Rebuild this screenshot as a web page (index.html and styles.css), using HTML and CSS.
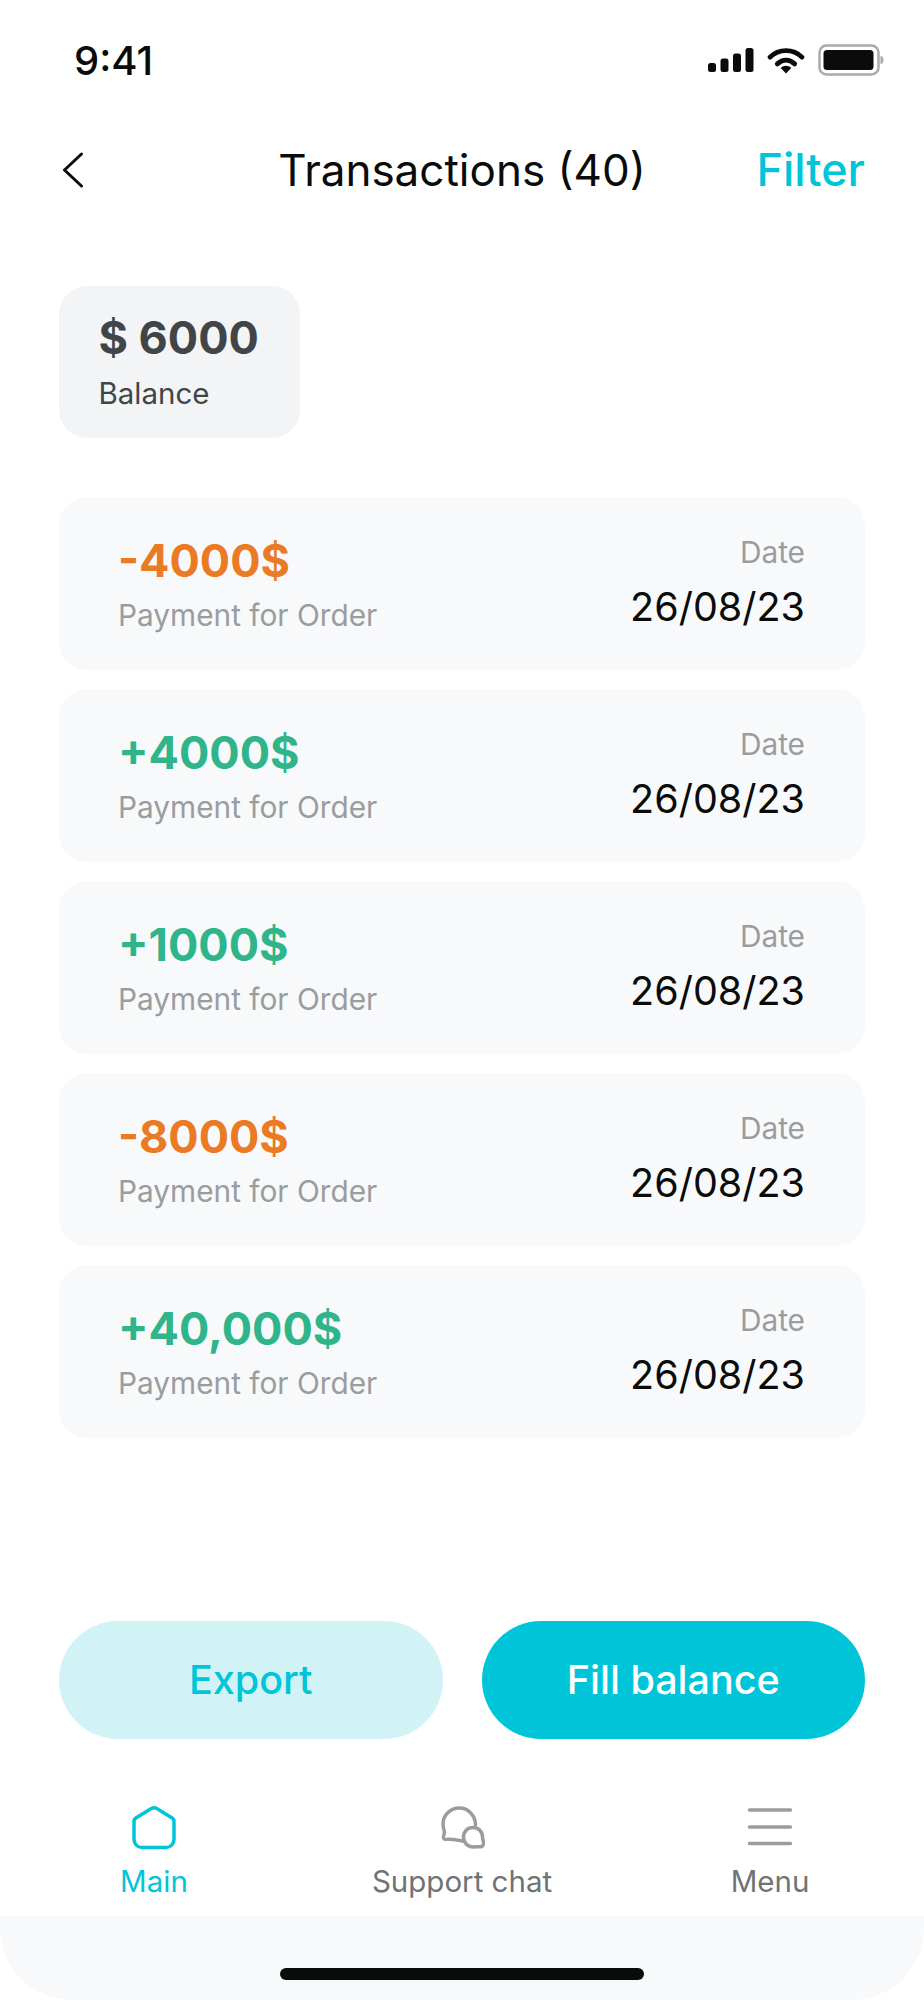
FILE: index.html
```html
<!DOCTYPE html>
<html lang="en">
  <head>
    <meta charset="UTF-8" />
    <meta name="viewport" content="width=device-width, initial-scale=1.0" />
    <title>Transactions</title>
    <link rel="stylesheet" href="styles.css">
  </head>
  <body>
    <div class="screen">
      <div class="status-bar">
        <span class="time">9:41</span>
        <div class="status-icons">
          <svg class="signal" width="46" height="24" viewBox="0 0 46 24">
            <rect x="0" y="15" width="8" height="9" rx="2.500" fill="#0a0c0b" />
            <rect x="12.500" y="10.500" width="8" height="13.500" rx="2.500" fill="#0a0c0b" />
            <rect x="25" y="5.500" width="8" height="18.500" rx="2.500" fill="#0a0c0b" />
            <rect x="37.500" y="0" width="8" height="24" rx="2.500" fill="#0a0c0b" />
          </svg>
          <svg class="wifi" width="38" height="27" viewBox="0 0 38 28">
            <path d="M2.500 10.500C11.500 1.500 26.500 1.500 35.500 10.500" fill="none" stroke="#0a0c0b" stroke-width="5" stroke-linecap="round" />
            <path d="M10 17.500C15.500 12.500 22.500 12.500 28 17.500" fill="none" stroke="#0a0c0b" stroke-width="5" stroke-linecap="round" />
            <path d="M13.500 21.800C16.800 18.800 21.200 18.800 24.500 21.800L19 27.500Z" fill="#0a0c0b" />
          </svg>
          <svg class="battery" width="66" height="32" viewBox="0 0 66 32">
            <rect x="1.500" y="1.500" width="59" height="29" rx="7" fill="none" stroke="#a9abab" stroke-width="2.500" />
            <rect x="5.500" y="6" width="50" height="20" rx="3.500" fill="#0a0c0b" />
            <path d="M62.500 11.500C64.500 12.500 65.500 14 65.500 16C65.500 18 64.500 19.500 62.500 20.500Z" fill="#a9abab" />
          </svg>
        </div>
      </div>

      <div class="top-bar">
        <button class="back">
          <svg width="22" height="36" viewBox="0 0 22 36">
            <path d="M19.500 2L2.500 18L19.500 34" fill="none" stroke="#0a0c0b" stroke-width="3" stroke-linecap="round" stroke-linejoin="round" />
          </svg>
        </button>
        <h1>Transactions (40)</h1>
        <a class="filter">Filter</a>
      </div>

      <div class="balance">
        <div class="balance-value">$ 6000</div>
        <div class="balance-label">Balance</div>
      </div>

      <div class="list">
        <div class="item">
          <div>
            <div class="amount minus">-4000$</div>
            <div class="note">Payment for Order</div>
          </div>
          <div class="item-date">
            <div class="note">Date</div>
            <div class="date">26/08/23</div>
          </div>
        </div>
        <div class="item">
          <div>
            <div class="amount plus">+4000$</div>
            <div class="note">Payment for Order</div>
          </div>
          <div class="item-date">
            <div class="note">Date</div>
            <div class="date">26/08/23</div>
          </div>
        </div>
        <div class="item">
          <div>
            <div class="amount plus">+1000$</div>
            <div class="note">Payment for Order</div>
          </div>
          <div class="item-date">
            <div class="note">Date</div>
            <div class="date">26/08/23</div>
          </div>
        </div>
        <div class="item">
          <div>
            <div class="amount minus">-8000$</div>
            <div class="note">Payment for Order</div>
          </div>
          <div class="item-date">
            <div class="note">Date</div>
            <div class="date">26/08/23</div>
          </div>
        </div>
        <div class="item">
          <div>
            <div class="amount plus">+40,000$</div>
            <div class="note">Payment for Order</div>
          </div>
          <div class="item-date">
            <div class="note">Date</div>
            <div class="date">26/08/23</div>
          </div>
        </div>
      </div>

      <div class="actions">
        <button class="btn btn-light">Export</button>
        <button class="btn btn-main">Fill balance</button>
      </div>

      <nav class="tabs">
        <div class="tab active">
          <svg width="46" height="44" viewBox="0 0 46 44">
            <path d="M3 15.500C3 14 3.700 12.800 4.800 12L20.300 2.600C22 1.600 24 1.600 25.700 2.600L41.200 12C42.300 12.800 43 14 43 15.500V33C43 38 39.500 41.500 35 41.500H11C6.500 41.500 3 38 3 33Z" fill="none" stroke="#00c5d9" stroke-width="3.500" stroke-linejoin="round" />
          </svg>
          <span>Main</span>
        </div>
        <div class="tab">
          <svg width="46" height="44" viewBox="0 0 46 44">
            <path d="M36.500 19C36.500 9.500 29 2 20.500 2C11 2 4 9.500 4 18C4 21.500 5 24 5.500 26C5.500 28 4 30 4.500 32C5 33.500 7 33.500 9 33.200C12 33 14 33.500 16.500 33.800C18 34 20 34 23.500 35" fill="none" stroke="#9a9d9e" stroke-width="3.500" stroke-linecap="round" stroke-linejoin="round" />
            <path d="M24.500 31C24.500 25.500 28.500 21.500 34 21.500C39.500 21.500 43.500 25.500 43.500 31C43.500 33 44.500 35 44.500 37C44.500 40.500 42.500 41 40 40.800C38 40.500 36.500 41 34 41C28.500 41 24.500 36.500 24.500 31Z" fill="none" stroke="#9a9d9e" stroke-width="3.500" stroke-linejoin="round" />
          </svg>
          <span>Support chat</span>
        </div>
        <div class="tab">
          <svg width="46" height="44" viewBox="0 0 46 44">
            <path d="M2.500 4H43.500M2.500 21H43.500M2.500 37.500H43.500" fill="none" stroke="#9a9d9e" stroke-width="3.500" stroke-linecap="round" />
          </svg>
          <span>Menu</span>
        </div>
      </nav>

      <div class="home-area">
        <div class="home-bar"></div>
      </div>
    </div>
  </body>
</html>
```

FILE: styles.css
```css
body {
  margin: 0;
  font-family: Inter, "Noto Sans", sans-serif;
  background-color: #fff;
  color: #0a0c0b;
}

.screen {
  width: 924px;
  height: 2000px;
  overflow: hidden;
  display: flex;
  flex-direction: column;
}

.status-bar {
  height: 60px;
  padding: 30px 40px 0 74px;
  display: flex;
  justify-content: space-between;
  align-items: center;
}

.time {
  font-size: 40px;
  font-weight: 500;
}

.status-icons {
  display: flex;
  align-items: center;
  gap: 13px;
}

.top-bar {
  margin-top: 52px;
  height: 50px;
  padding: 0 59px;
  display: grid;
  grid-template-columns: 1fr auto 1fr;
  align-items: center;
}

.top-bar h1 {
  margin: 0;
  font-size: 44px;
  font-weight: 400;
}

.back {
  margin-left: 3px;
  padding: 0;
  background: none;
  border: none;
  display: flex;
}

.filter {
  justify-self: end;
  font-size: 45px;
  font-weight: 500;
  color: #00c5d9;
}

.balance {
  margin: 94px 0 0 59px;
  width: 241px;
  height: 152px;
  padding: 27px 0 0 39.500px;
  box-sizing: border-box;
  background-color: #f3f4f6;
  border-radius: 28px;
}

.balance-value {
  font-size: 45px;
  font-weight: 700;
  line-height: 50px;
  color: #414548;
}

.balance-label {
  margin-top: 12px;
  font-size: 29.500px;
  line-height: 36px;
  color: #414548;
}

.list {
  margin: 59px 59px 0;
  display: flex;
  flex-direction: column;
  gap: 19.500px;
}

.item {
  height: 172.500px;
  padding: 0 60px 0 59px;
  box-sizing: border-box;
  background-color: #f8f9fb;
  border-radius: 28px;
  display: flex;
  justify-content: space-between;
  align-items: center;
}

.amount {
  margin: 2px 0 11px;
  font-size: 45px;
  font-weight: 700;
  line-height: 50px;
}

.minus {
  color: #ea7a24;
}

.plus {
  color: #30b58b;
}

.note {
  font-size: 29.800px;
  line-height: 36px;
  color: #9a9d9e;
}

.item-date {
  text-align: right;
}

.date {
  margin-top: 12px;
  font-size: 39.500px;
  line-height: 50px;
}

.actions {
  margin: auto 59px 0;
  display: flex;
  gap: 39px;
}

.btn {
  flex: 1;
  height: 118px;
  border: none;
  border-radius: 59px;
  font-family: inherit;
  font-size: 39.500px;
  font-weight: 500;
}

.btn-light {
  color: #00c5d9;
  background-color: #d2f3f6;
}

.btn-main {
  color: #fff;
  background-color: #00c5d9;
}

.tabs {
  margin-top: 67px;
  height: 110px;
  display: grid;
  grid-template-columns: repeat(3, 1fr);
}

.tab {
  display: flex;
  flex-direction: column;
  align-items: center;
  gap: 13px;
  font-size: 29.500px;
  color: #6f7375;
}

.tab.active {
  color: #00c5d9;
}

.home-area {
  height: 84px;
  background-color: #f8f9fb;
  border-radius: 0 0 72px 72px;
  display: flex;
  justify-content: center;
  padding-top: 52px;
  box-sizing: border-box;
}

.home-bar {
  width: 364px;
  height: 12px;
  background-color: #0a0c0b;
  border-radius: 6px;
}
```
